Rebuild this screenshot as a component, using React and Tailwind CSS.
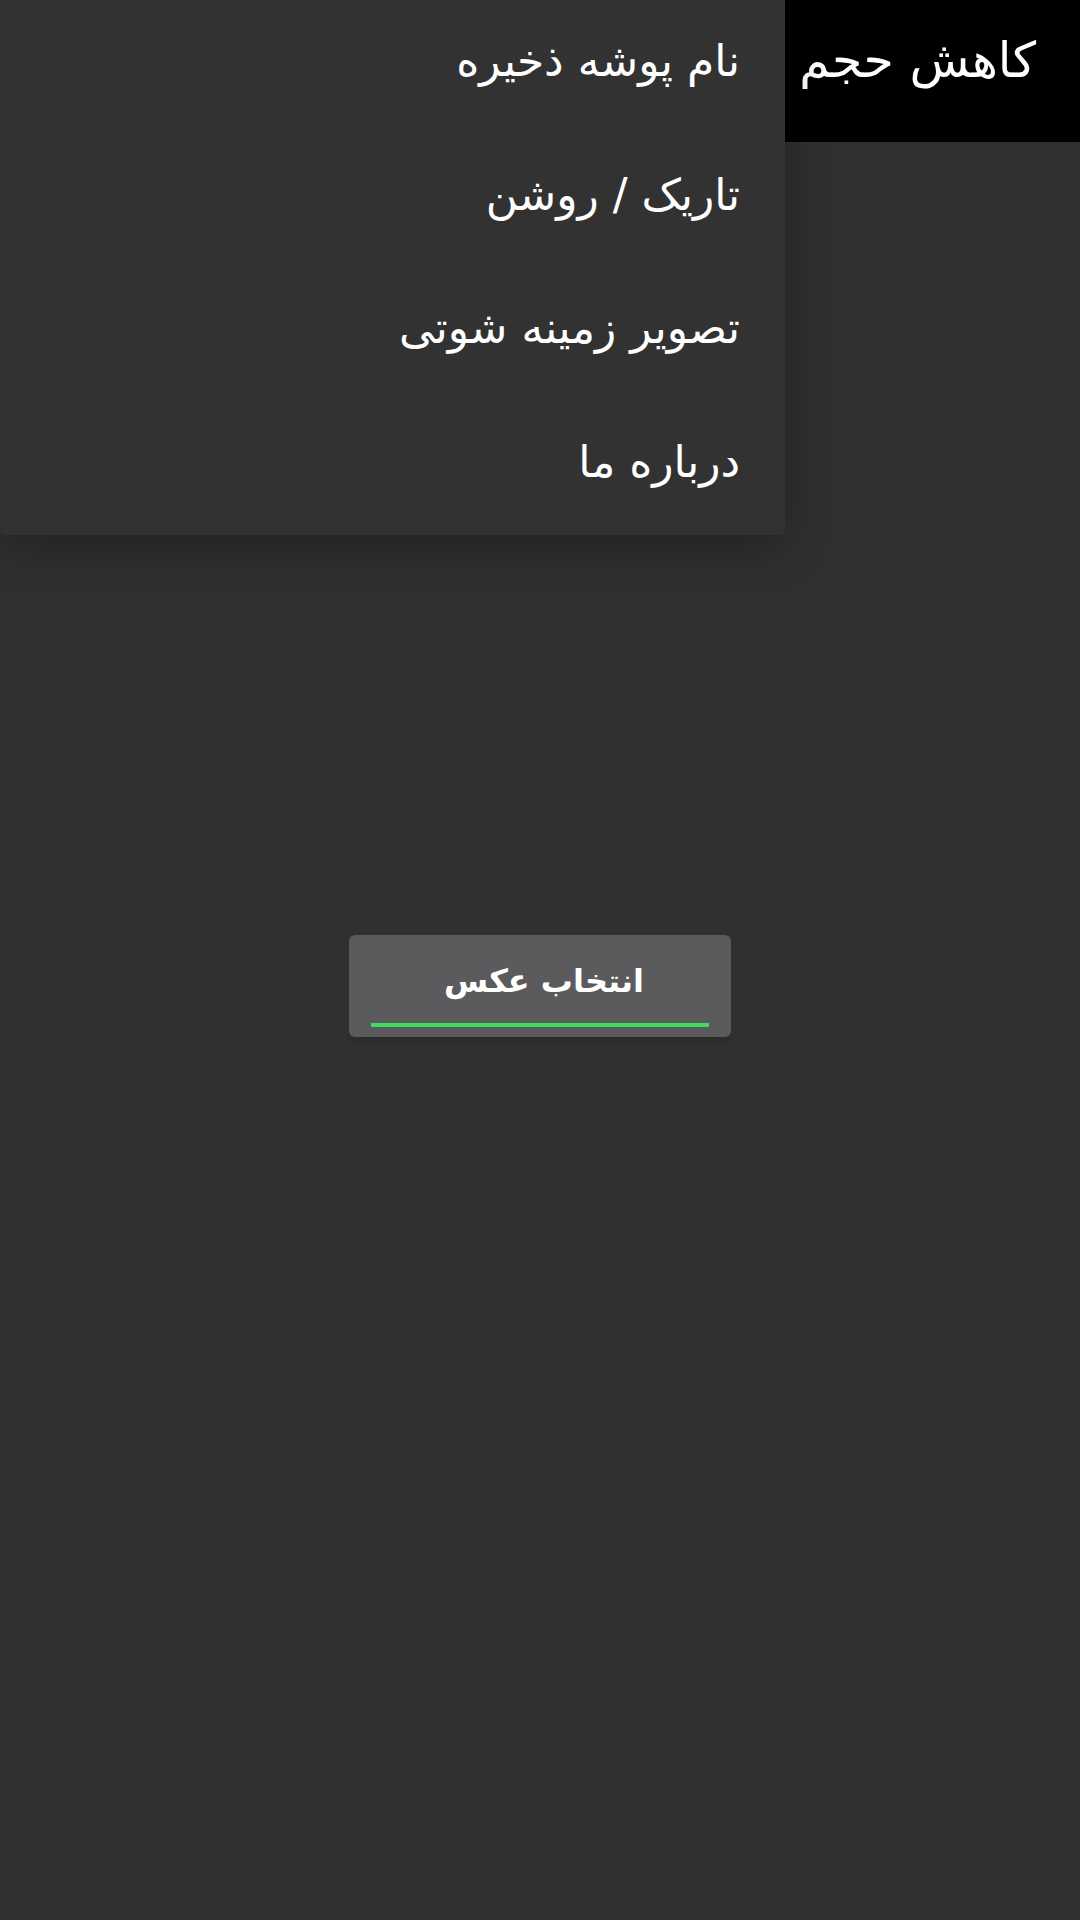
export default function App() {
  const items = ["نام پوشه ذخیره", "تاریک / روشن", "تصویر زمینه شوتی", "درباره ما"];
  return (
    <div dir="rtl" className="relative w-[1080px] h-[1920px] bg-[#303030] overflow-hidden" style={{ fontFamily: '"DejaVu Sans", sans-serif' }}>
      <div className="h-[142px] bg-black flex items-center pr-[44px] pb-[22px]">
        <span className="text-white text-[49px] leading-none">کاهش حجم</span>
      </div>
      <div className="flex justify-center pt-[793px]">
        <button className="w-[382px] h-[102px] bg-[#5b5b5d] rounded-[6px] flex flex-col items-center justify-end pb-[10px] shadow-md">
          <span className="text-white text-[32px] font-bold leading-none mb-[26px] ml-[8px]">انتخاب عکس</span>
          <span className="block w-[338px] h-[4px] bg-[#3ddc5a]"></span>
        </button>
      </div>
      <div className="absolute top-0 left-0 w-[785px] h-[535px] bg-[#323232] rounded-b-[5px] shadow-[0_12px_50px_rgba(0,0,0,0.3)] flex flex-col">
        {items.map((t) => (
          <div key={t} className="h-[134px] flex items-center pr-[45px] pb-[12px]">
            <span className="text-white text-[44px] leading-none">{t}</span>
          </div>
        ))}
      </div>
    </div>
  );
}
